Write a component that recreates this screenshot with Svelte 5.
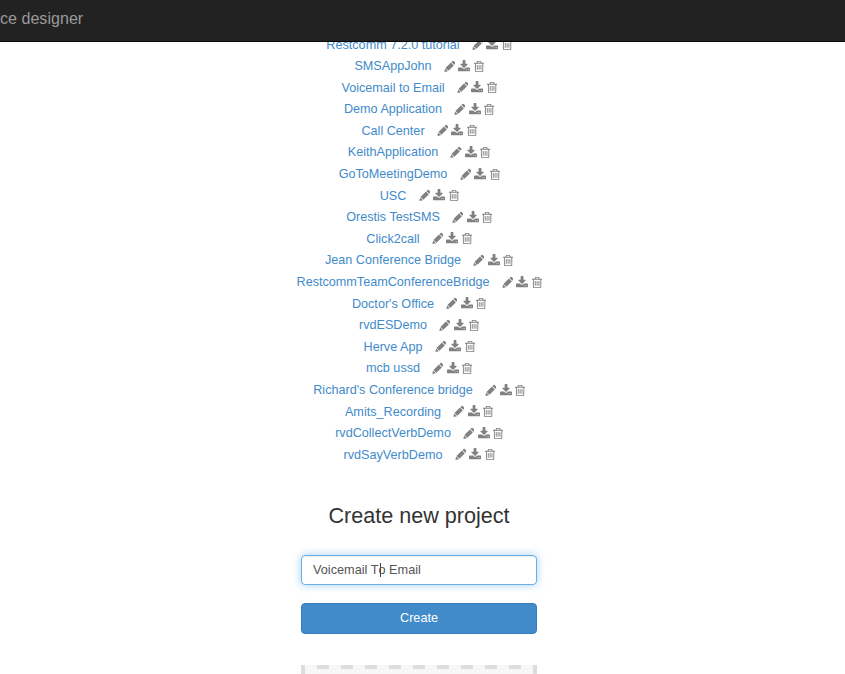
<script>
  const projects = [
    'Restcomm 7.2.0 tutorial', 'SMSAppJohn', 'Voicemail to Email', 'Demo Application',
    'Call Center', 'KeithApplication', 'GoToMeetingDemo', 'USC', 'Orestis TestSMS',
    'Click2call', 'Jean Conference Bridge', 'RestcommTeamConferenceBridge',
    "Doctor's Office", 'rvdESDemo', 'Herve App', 'mcb ussd',
    "Richard's Conference bridge", 'Amits_Recording', 'rvdCollectVerbDemo', 'rvdSayVerbDemo'
  ];
</script>

<div class="page">
  <header><span>ce designer</span></header>
  <main>
    <ul>
      {#each projects as name}
        <li>
          <a href="#project">{name}</a>
          <span class="actions">
            <svg class="pencil" viewBox="0 0 12 13"><path d="M.4 12.500l.8-3.900 3.100 3zM1.600 8.200L7.500 2.200l3.100 3.100-5.900 5.900zM8 1.700L9.200.5q.6-.5 1.200 0l1.800 1.800q.5.6 0 1.200L11 4.700z" /></svg>
            <svg class="download" viewBox="0 0 1664 1792"><path d="M1280 1344q0-26-19-45t-45-19-45 19-19 45 19 45 45 19 45-19 19-45zm256 0q0-26-19-45t-45-19-45 19-19 45 19 45 45 19 45-19 19-45zm128-224v320q0 40-28 68t-68 28h-1472q-40 0-68-28t-28-68v-320q0-40 28-68t68-28h465l135 136q58 56 136 56t136-56l136-136h464q40 0 68 28t28 68zm-325-569q17 41-14 70l-448 448q-18 19-45 19t-45-19l-448-448q-31-29-14-70 17-39 59-39h256v-448q0-26 19-45t45-19h256q26 0 45 19t19 45v448h256q42 0 59 39z" /></svg>
            <svg class="trash" viewBox="0 0 1408 1792"><path d="M512 736v576q0 14-9 23t-23 9h-64q-14 0-23-9t-9-23v-576q0-14 9-23t23-9h64q14 0 23 9t9 23zm256 0v576q0 14-9 23t-23 9h-64q-14 0-23-9t-9-23v-576q0-14 9-23t23-9h64q14 0 23 9t9 23zm256 0v576q0 14-9 23t-23 9h-64q-14 0-23-9t-9-23v-576q0-14 9-23t23-9h64q14 0 23 9t9 23zm128 724v-948h-896v948q0 22 7 40.500t14.500 27 10.500 8.500h832q3 0 10.500-8.500t14.500-27 7-40.500zm-672-1076h448l-48-117q-7-9-17-11h-317q-10 2-17 11zm928 32v64q0 14-9 23t-23 9h-96v948q0 83-47 143.500t-113 60.500h-832q-66 0-113-58.500t-47-141.500v-952h-96q-14 0-23-9t-9-23v-64q0-14 9-23t23-9h309l70-167q15-37 54-63t79-26h320q40 0 79 26t54 63l70 167h309q14 0 23 9t9 23z" /></svg>
          </span>
        </li>
      {/each}
    </ul>
    <h2>Create new project</h2>
    <div class="field"><span>Voicemail T<i class="caret"></i>o Email</span></div>
    <button>Create</button>
    <div class="dropzone"><div class="dashes"></div></div>
  </main>
</div>

<style>
  :global(body) { overflow: hidden; }
  .page {
    width: 845px;
    height: 674px;
    overflow: hidden;
    background: #fff;
    color: #333;
    font: 12.64px/21.6px "Liberation Sans", Arial, sans-serif;
    display: flex;
    flex-direction: column;
  }
  header {
    box-sizing: border-box;
    flex: none;
    height: 42px;
    background: #222;
    border-bottom: 1px solid #080808;
    color: #999;
    font-size: 16.1px;
    line-height: 37px;
    z-index: 1;
  }
  main {
    width: 236px;
    margin-left: 301px;
    display: flex;
    flex-direction: column;
    align-items: stretch;
  }
  ul {
    list-style: none;
    margin: -7.5px -60.2px 0 -59.8px;
    padding: 0;
  }
  li {
    height: 21.6px;
    display: flex;
    justify-content: center;
    align-items: center;
    white-space: nowrap;
  }
  a { color: #428bca; text-decoration: none; }
  .actions { display: flex; gap: 3.4px; margin: -1.6px 0 0 12.2px; }
  svg { display: block; height: 13px; fill: #808080; }
  .pencil { width: 11.14px; }
  .download { width: 12.07px; }
  .trash { width: 10.21px; }
  h2 {
    margin: 35.5px 0 0;
    font-size: 21.6px;
    line-height: 28px;
    font-weight: 400;
    text-align: center;
  }
  .field {
    box-sizing: border-box;
    height: 30px;
    margin-top: 25px;
    padding: 0 11px;
    border: 1px solid #66afe9;
    border-radius: 4px;
    box-shadow: inset 0 1px 1px rgba(0, 0, 0, .075), 0 0 8px rgba(102, 175, 233, .6);
    color: #555;
    font-size: 12.72px;
    line-height: 28px;
  }
  .caret {
    position: relative;
    left: 1px;
    display: inline-block;
    width: 1px;
    height: 14px;
    margin-right: -1px;
    background: #444;
    vertical-align: -3px;
  }
  button {
    height: 31px;
    margin: 18px 0 0;
    padding: 0;
    border: 1px solid #357ebd;
    border-radius: 4px;
    background: #428bca;
    color: #fff;
    font: inherit;
  }
  .dropzone {
    box-sizing: border-box;
    height: 40px;
    flex: none;
    margin-top: 31px;
    border: solid #ddd;
    border-width: 0 4px;
    background: #f7f7f7;
  }
  .dashes {
    height: 4px;
    margin-left: 12px;
    background: repeating-linear-gradient(90deg, #ddd 0 12px, transparent 12px 24px);
  }
</style>
